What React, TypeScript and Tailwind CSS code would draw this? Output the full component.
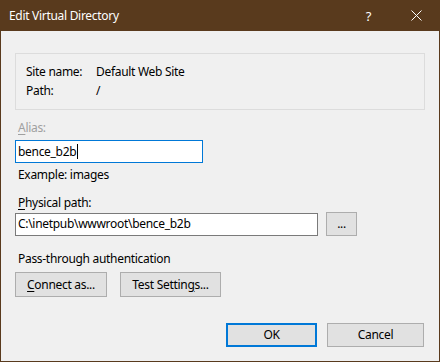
import React from "react";

const font = { fontFamily: '"Segoe UI", "Noto Sans", sans-serif' };

function Btn({ children, className = "" }: { children: React.ReactNode; className?: string }) {
  return (
    <div
      className={`flex items-center justify-center bg-[#e1e1e1] border border-[#adadad] text-[12px] text-black ${className}`}
    >
      {children}
    </div>
  );
}

export default function App() {
  return (
    <div
      className="w-[440px] h-[362px] flex flex-col bg-[#f0f0f0] border-x border-b border-[#593a1d] text-[12px] leading-[16px] tracking-[-0.3px] text-black"
      style={font}
    >
      <div className="h-[31px] -mx-px bg-[#593a1d] flex items-center text-white shrink-0">
        <span className="ml-[9px] text-[12px]">Edit Virtual Directory</span>
        <span className="ml-auto mr-[40px] text-[13px]">?</span>
        <svg width="11" height="11" viewBox="0 0 11 11" className="mr-[18px]">
          <path d="M0.5 0.5 L10.5 10.5 M10.5 0.5 L0.5 10.5" stroke="white" strokeWidth="1" fill="none" />
        </svg>
      </div>
      <div className="flex flex-col px-[14px]">
        <div className="mt-[22px] h-[57px] border border-[#dcdcdc] px-[10px] pt-[10px] flex flex-col gap-[3px]">
          <div className="flex">
            <span className="w-[70px]">Site name:</span>
            <span>Default Web Site</span>
          </div>
          <div className="flex">
            <span className="w-[70px]">Path:</span>
            <span>/</span>
          </div>
        </div>
        <div className="mt-[10px] pl-[3px] text-[#a0a0a0]">
          <span className="underline underline-offset-2">A</span>lias:
        </div>
        <div className="mt-[4px] w-[188px] h-[23px] border border-[#0078d7] bg-white flex items-center pl-[2px]">
          <span>bence_b2b</span>
          <span className="w-px h-[15px] bg-black ml-px" />
        </div>
        <div className="mt-[4px] pl-[3px]">Example: images</div>
        <div className="mt-[12px] pl-[3px]">
          <span className="underline underline-offset-2">P</span>hysical path:
        </div>
        <div className="mt-px flex items-center">
          <div className="w-[303px] h-[23px] border border-[#7a7a7a] bg-white flex items-center pl-[2px]">
            C:\inetpub\wwwroot\bence_b2b
          </div>
          <Btn className="ml-[8px] w-[31px] h-[24px]">...</Btn>
        </div>
        <div className="mt-[15px] pl-[3px]">Pass-through authentication</div>
        <div className="mt-[5px] flex">
          <Btn className="w-[92px] h-[25px]">
            <span className="underline underline-offset-2">C</span>onnect as...
          </Btn>
          <Btn className="ml-[13px] w-[101px] h-[25px]">
            Test Settin<span className="underline underline-offset-2">g</span>s...
          </Btn>
        </div>
        <div className="mt-[26px] flex justify-end">
          <Btn className="w-[91px] h-[24px] !border-2 !border-[#0078d7]">OK</Btn>
          <Btn className="ml-[10px] w-[97px] h-[24px] mr-px">Cancel</Btn>
        </div>
      </div>
    </div>
  );
}
